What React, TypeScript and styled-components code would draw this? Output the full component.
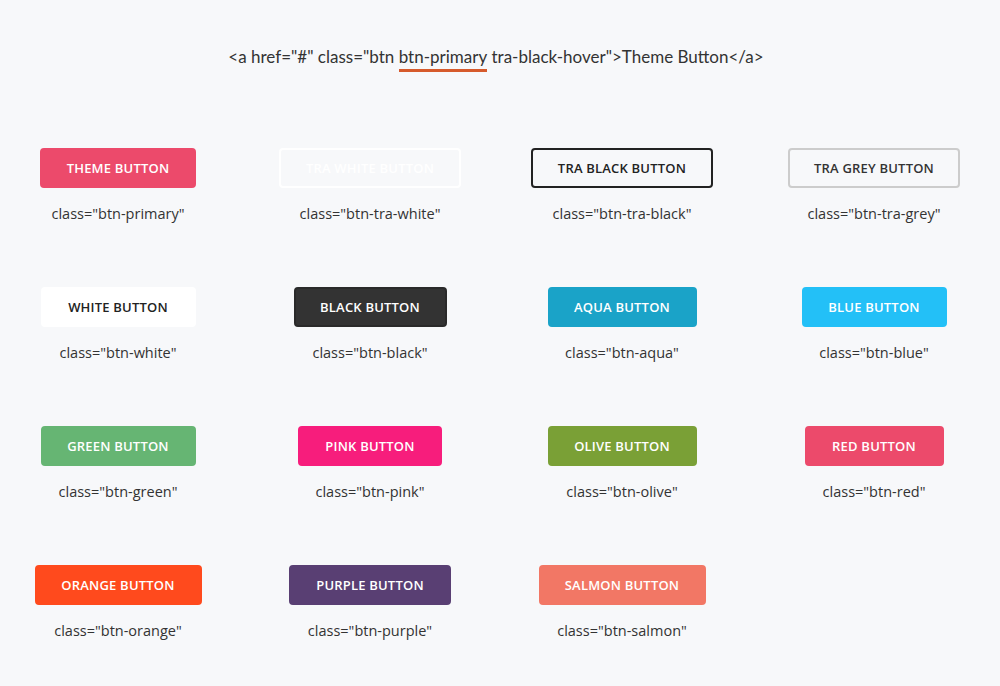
import React from "react";
import styled, { createGlobalStyle } from "styled-components";

const Global = createGlobalStyle`
  html, body { margin: 0; padding: 0; background: #f7f8fa; overflow: hidden; }
  body { font-family: "Open Sans", "Noto Sans", sans-serif; color: #333; }
`;

const Page = styled.div`
  width: 1000px;
  height: 686px;
  background: #f7f8fa;
  display: flex;
  flex-direction: column;
`;

const Header = styled.div`
  padding-top: 45px;
  padding-right: 8px;
  text-align: center;
  font-family: "Lato", "Open Sans", sans-serif;
  font-size: 17px;
  line-height: 24px;
  color: #333;
`;

const Marked = styled.span`
  display: inline-block;
  line-height: 24px;
  border-bottom: 3px solid #d65a2c;
  height: 24px;
  vertical-align: top;
`;

const Grid = styled.div`
  margin-top: 76px;
  margin-left: -8px;
  display: grid;
  grid-template-columns: repeat(4, 252px);
  row-gap: 63px;
`;

const Cell = styled.div`
  display: flex;
  flex-direction: column;
  align-items: center;
  gap: 16px;
`;

const Btn = styled.a<{ $bg: string; $fg: string; $border: string; $w: number }>`
  box-sizing: border-box;
  display: flex;
  align-items: center;
  justify-content: center;
  height: 40px;
  width: ${(p) => p.$w}px;
  border-radius: 4px;
  background: ${(p) => p.$bg};
  color: ${(p) => p.$fg};
  border: 2px solid ${(p) => p.$border};
  font-family: "Open Sans", "Noto Sans", sans-serif;
  font-weight: 600;
  font-size: 13px;
  letter-spacing: 0.2px;
  text-transform: uppercase;
  text-decoration: none;
  white-space: nowrap;
`;

const Label = styled.div`
  font-family: "Open Sans", "Noto Sans", sans-serif;
  font-size: 14.5px;
  line-height: 20px;
  color: #333;
  white-space: nowrap;
`;

const items: { text: string; cls: string; bg: string; fg: string; border: string; w: number }[] = [
  { text: "Theme Button", cls: "btn-primary", bg: "#ec4a6b", fg: "#fff", border: "#ec4a6b", w: 156 },
  { text: "Tra White Button", cls: "btn-tra-white", bg: "transparent", fg: "#fff", border: "#fff", w: 182 },
  { text: "Tra Black Button", cls: "btn-tra-black", bg: "transparent", fg: "#222", border: "#222", w: 182 },
  { text: "Tra Grey Button", cls: "btn-tra-grey", bg: "transparent", fg: "#333", border: "#ccc", w: 172 },
  { text: "White Button", cls: "btn-white", bg: "#fff", fg: "#222", border: "#fff", w: 155 },
  { text: "Black Button", cls: "btn-black", bg: "#333", fg: "#fff", border: "#2a2a2a", w: 153 },
  { text: "Aqua Button", cls: "btn-aqua", bg: "#1aa3c8", fg: "#fff", border: "#1aa3c8", w: 149 },
  { text: "Blue Button", cls: "btn-blue", bg: "#23c0f7", fg: "#fff", border: "#23c0f7", w: 145 },
  { text: "Green Button", cls: "btn-green", bg: "#66b573", fg: "#fff", border: "#66b573", w: 155 },
  { text: "Pink Button", cls: "btn-pink", bg: "#f71d7c", fg: "#fff", border: "#f71d7c", w: 144 },
  { text: "Olive Button", cls: "btn-olive", bg: "#7aa036", fg: "#fff", border: "#7aa036", w: 149 },
  { text: "Red Button", cls: "btn-red", bg: "#ec4a6b", fg: "#fff", border: "#ec4a6b", w: 139 },
  { text: "Orange Button", cls: "btn-orange", bg: "#ff4a1d", fg: "#fff", border: "#ff4a1d", w: 167 },
  { text: "Purple Button", cls: "btn-purple", bg: "#593f73", fg: "#fff", border: "#593f73", w: 162 },
  { text: "Salmon Button", cls: "btn-salmon", bg: "#f27765", fg: "#fff", border: "#f27765", w: 167 },
];

export default function App() {
  return (
    <>
      <Global />
      <Page>
        <Header>
          {'<a href="#" class="btn '}
          <Marked>btn-primary</Marked>
          {' tra-black-hover">Theme Button</a>'}
        </Header>
        <Grid>
          {items.map((it) => (
            <Cell key={it.cls}>
              <Btn href="#" $bg={it.bg} $fg={it.fg} $border={it.border} $w={it.w}>
                {it.text}
              </Btn>
              <Label>{`class="${it.cls}"`}</Label>
            </Cell>
          ))}
        </Grid>
      </Page>
    </>
  );
}
